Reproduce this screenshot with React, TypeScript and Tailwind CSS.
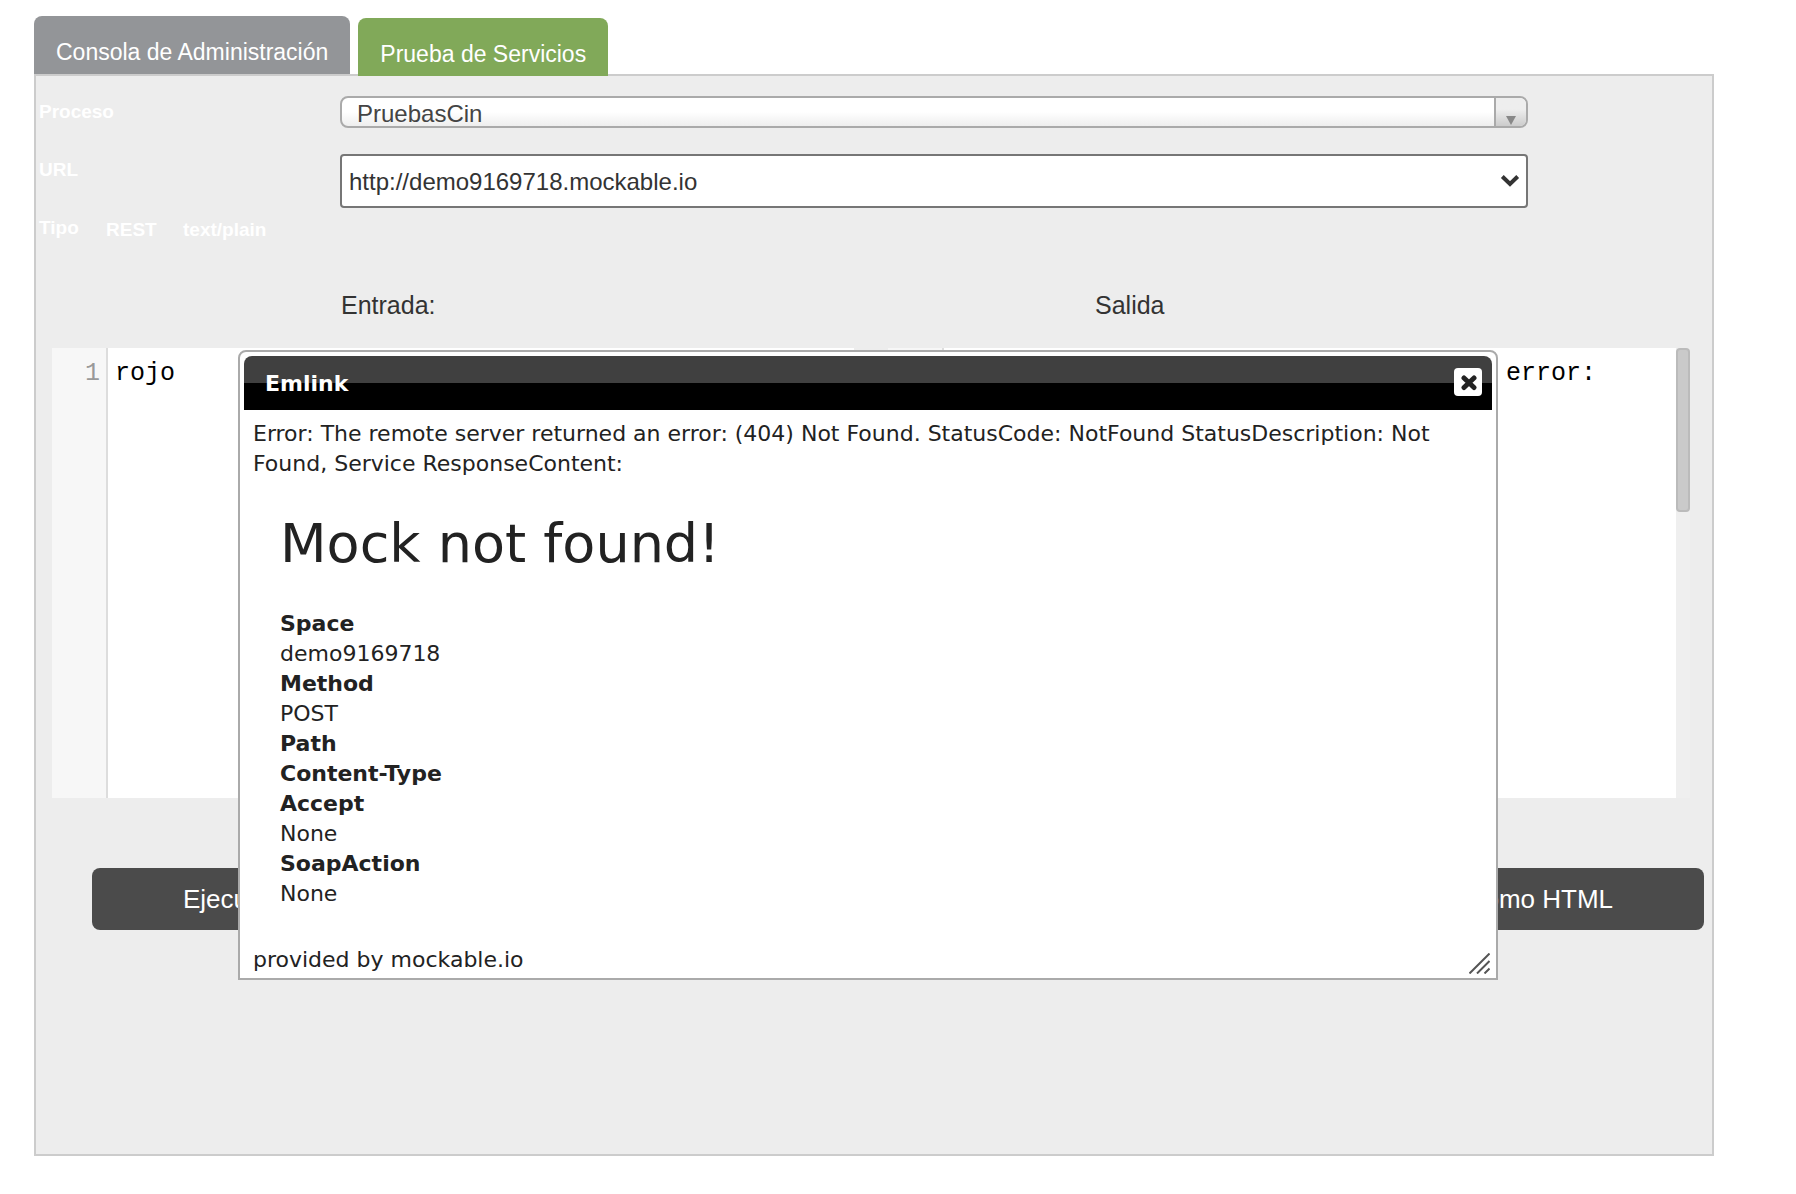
import React from "react";

const details: { term: string; value?: string }[] = [
  { term: "Space", value: "demo9169718" },
  { term: "Method", value: "POST" },
  { term: "Path" },
  { term: "Content-Type" },
  { term: "Accept", value: "None" },
  { term: "SoapAction", value: "None" },
];

function Tabs() {
  return (
    <nav className="flex items-end gap-2 text-[23px] leading-7 text-white">
      <a href="#consola" className="rounded-t-lg bg-[#939598] px-[22px] pt-[22px] pb-2">
        Consola de Administración
      </a>
      <a
        href="#prueba"
        aria-current="page"
        className="relative -mb-0.5 rounded-t-lg bg-[#81a959] px-[22px] pt-[22px] pb-2"
      >
        Prueba de Servicios
      </a>
    </nav>
  );
}

function ServiceForm() {
  return (
    <form className="pr-[184px] pl-[3px] text-[19px] font-bold text-white">
      <div className="flex items-start pt-5">
        <label htmlFor="proceso" className="w-[301px] leading-8">
          Proceso
        </label>
        <div className="relative flex-1">
          <select
            id="proceso"
            defaultValue="PruebasCin"
            className="block h-8 w-full appearance-none rounded-lg border-2 border-[#aaa] bg-linear-to-b from-white from-50% to-[#eee] pt-1 pl-[15px] text-2xl leading-6 font-normal text-[#444]"
          >
            <option>PruebasCin</option>
          </select>
          <span className="pointer-events-none absolute inset-y-0.5 right-0.5 flex w-8 items-end justify-center rounded-r-md border-l-2 border-[#aaa] bg-linear-to-b from-[#eee] from-40% to-[#ccc]">
            <svg width="10" height="10" viewBox="0 0 10 10" fill="#888" aria-hidden="true">
              <path d="M0 0h10L5 9z" />
            </svg>
          </span>
        </div>
      </div>

      <div className="mt-[26px] flex items-start">
        <label htmlFor="url" className="w-[301px] leading-8">
          URL
        </label>
        <div className="relative flex-1">
          <select
            id="url"
            defaultValue="http://demo9169718.mockable.io"
            className="block h-[54px] w-full appearance-none rounded-[4px] border-2 border-[#767676] bg-white pt-0.5 pl-[7px] text-2xl leading-8 font-normal text-[#333]"
          >
            <option>http://demo9169718.mockable.io</option>
          </select>
          <svg
            className="pointer-events-none absolute top-5 right-2"
            width="20"
            height="14"
            viewBox="0 0 20 14"
            fill="none"
            stroke="#333"
            strokeWidth="4"
            aria-hidden="true"
          >
            <path d="M2.3 2.5 10 10l7.700-7.500" />
          </svg>
        </div>
      </div>

      <div className="mt-1 flex h-8">
        <span className="w-[67px] leading-8">Tipo</span>
        <span className="w-[77px] leading-9">REST</span>
        <span className="leading-9">text/plain</span>
      </div>
    </form>
  );
}

function Editor({ label, value, scroll }: { label: string; value: string; scroll?: boolean }) {
  return (
    <div className="flex h-[450px] font-['Liberation_Mono',monospace] text-[25px] leading-9">
      <div className="w-14 border-r-2 border-[#ddd] bg-[#f7f7f7] pt-2 pr-1.5 text-right text-[#999]">1</div>
      <textarea
        aria-label={label}
        defaultValue={value}
        wrap="off"
        spellCheck={false}
        className="min-w-0 flex-1 resize-none overflow-hidden bg-white pt-2 pl-[7px] text-black outline-none"
      />
      {scroll && (
        <div className="w-3.5 bg-[#efefef]">
          <div className="h-[164px] rounded-[4px] border-2 border-[#bbb] bg-[#cacaca]" />
        </div>
      )}
    </div>
  );
}

function ErrorDialog() {
  return (
    <section
      role="dialog"
      aria-labelledby="dialog-title"
      className="absolute top-[350px] right-[298px] left-[238px] rounded-t-lg border-2 border-[#aaa] bg-white font-['DejaVu_Sans',sans-serif] text-[22px] leading-[30px] text-[#222]"
    >
      <header className="mx-1 mt-1 flex h-[54px] items-center justify-between rounded-t-lg bg-linear-to-b from-[#404040] from-50% to-black to-50% pr-[10px] pl-[21px]">
        <h2 id="dialog-title" className="pt-0.5 text-[22px] font-bold text-white">
          Emlink
        </h2>
        <button
          type="button"
          aria-label="Cerrar"
          className="mb-0.5 flex size-7 items-center justify-center rounded-[4px] bg-white"
        >
          <svg width="18" height="18" viewBox="0 0 18 18" stroke="#222" strokeWidth="5" strokeLinecap="round" aria-hidden="true">
            <path d="m5 5 10 9.500M15 5 5 14.500" />
          </svg>
        </button>
      </header>
      <div className="px-[13px] pt-[9px] pb-[3px]">
        <p>
          Error: The remote server returned an error: (404) Not Found. StatusCode: NotFound StatusDescription: Not
          Found, Service ResponseContent:
        </p>
        <div className="px-[27px]">
          <h1 className="mt-8 text-[54px] leading-[66px]">Mock not found!</h1>
          <dl className="mt-8">
            {details.map(({ term, value }) => (
              <React.Fragment key={term}>
                <dt className="font-bold">{term}</dt>
                {value && <dd>{value}</dd>}
              </React.Fragment>
            ))}
          </dl>
        </div>
        <p className="mt-9">provided by mockable.io</p>
      </div>
      <svg
        className="absolute right-1.5 bottom-1"
        width="21"
        height="21"
        viewBox="0 0 21 21"
        stroke="#555"
        strokeWidth="2"
        aria-hidden="true"
      >
        <path d="M0.500 20.500 20.500 0.500M8 20.500 20.500 8M15.500 20.500l5-5" />
      </svg>
    </section>
  );
}

export default function App() {
  return (
    <div className="relative pt-4 pr-[82px] pb-[38px] pl-[34px] font-['Liberation_Sans',Arial,sans-serif]">
      <Tabs />
      <main className="border-2 border-[#ccc] bg-[#ededed] pb-[224px]">
        <ServiceForm />
        <div className="mt-[46px] grid grid-cols-2 gap-x-[34px] gap-y-7 pr-[22px] pl-4">
          <h3 className="pl-[289px] text-[25px] leading-[30px] text-[#333]">Entrada:</h3>
          <h3 className="pl-[207px] text-[25px] leading-[30px] text-[#333]">Salida</h3>
          <Editor label="Entrada" value="rojo" />
          <Editor label="Salida" value="Error: The remote server returned an error:" scroll />
        </div>
        <div className="mt-[70px] flex justify-between pr-2 pl-14 text-[26px] text-white">
          <button type="button" className="h-[62px] rounded-lg bg-[#4b4b4b] px-[91px]">
            Ejecutar
          </button>
          <button type="button" className="h-[62px] rounded-lg bg-[#4b4b4b] px-[91px]">
            Ver como HTML
          </button>
        </div>
      </main>
      <ErrorDialog />
    </div>
  );
}
